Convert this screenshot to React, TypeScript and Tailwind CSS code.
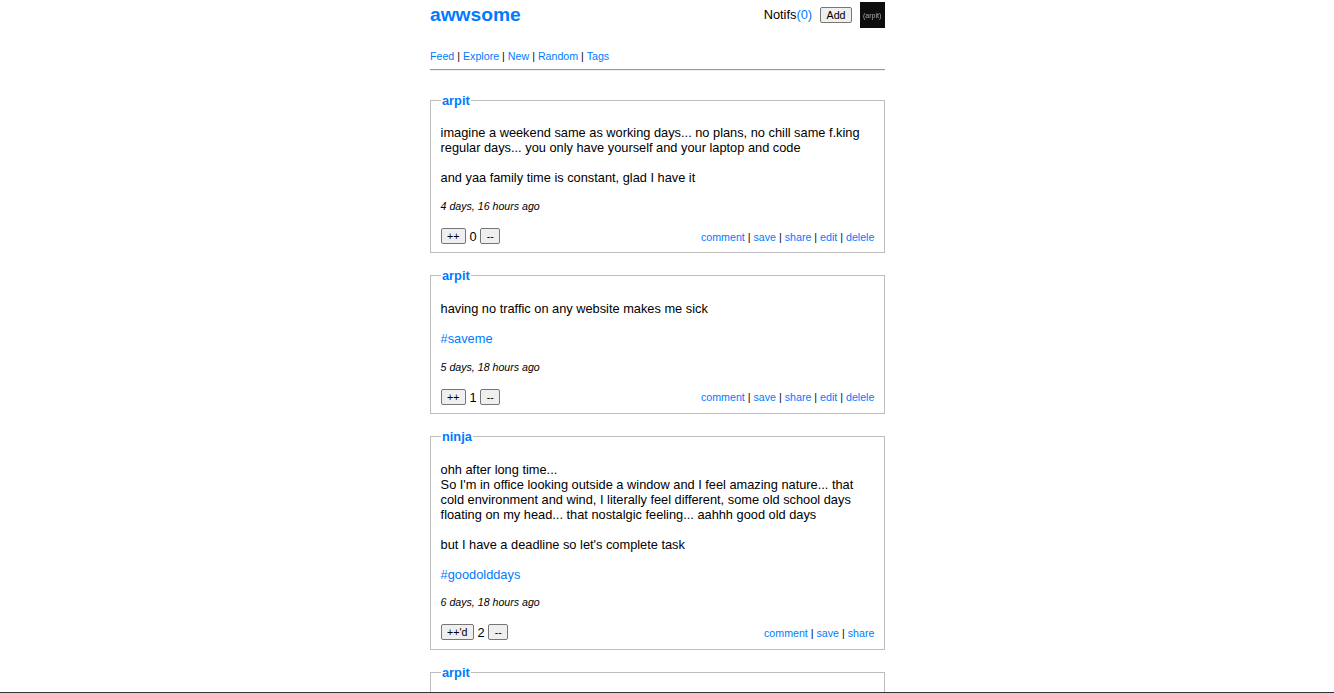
const blue = "text-[#007bff]";

function Sep() {
  return <span className="text-black"> | </span>;
}

function LinkRow({ items, lift }: { items: string[]; lift?: boolean }) {
  return (
    <div className={lift ? "pb-px text-[10.67px] leading-[13px]" : "text-[10.67px] leading-[13px]"}>
      {items.map((t, i) => (
        <span key={t}>
          {i > 0 && <Sep />}
          <a className={blue}>{t}</a>
        </span>
      ))}
    </div>
  );
}

function VoteButton({ label }: { label: string }) {
  return (
    <button className="h-4 rounded-[2px] border border-[#767676] bg-[#efefef] px-[5.5px] text-[10.67px] leading-[13px] text-black">
      {label}
    </button>
  );
}

type Post = {
  author: string;
  time?: string;
  votes?: number;
  up?: string;
  actions?: string[];
  tight?: boolean;
  lift?: boolean;
  raiseTime?: boolean;
  body?: React.ReactNode;
};

function PostCard({ post }: { post: Post }) {
  return (
    <fieldset
      className={
        post.raiseTime
          ? "mb-[15px] border border-[#bdbdbd] px-[9.6px] pb-[9px]"
          : "mb-[15px] border border-[#bdbdbd] px-[9.6px] pb-2"
      }
    >
      <legend className="ml-[0.4px] px-[1px] text-[12.8px] leading-[15px] font-bold">
        <a className={blue}>{post.author}</a>
      </legend>
      {post.body ? (
        <>
          <div className={post.tight ? "pt-[17px] text-[12.8px] leading-[15px] text-black" : "pt-[18px] text-[12.8px] leading-[15px] text-black"}>
            {post.body}
          </div>
          <div
            className={
              post.raiseTime
                ? "mt-[14px] text-[10.624px] leading-[13px] text-black italic"
                : "mt-[15px] text-[10.624px] leading-[13px] text-black italic"
            }
          >
            {post.time}
          </div>
          <div className="mt-[15px] flex items-end justify-between">
            <div className="flex items-center gap-[3.5px] text-[12.8px] leading-[15px] text-black">
              <VoteButton label={post.up ?? ""} />
              <span>{post.votes}</span>
              <VoteButton label="--" />
            </div>
            <LinkRow items={post.actions ?? []} lift={post.lift} />
          </div>
        </>
      ) : (
        <div className="h-10" />
      )}
    </fieldset>
  );
}

const own = ["comment", "save", "share", "edit", "delele"];

const posts: Post[] = [
  {
    author: "arpit",
    time: "4 days, 16 hours ago",
    votes: 0,
    up: "++",
    actions: own,
    tight: true,
    body: (
      <>
        <p>
          imagine a weekend same as working days... no plans, no chill same f.king
          <br />
          regular days... you only have yourself and your laptop and code
        </p>
        <p className="mt-[15px]">and yaa family time is constant, glad I have it</p>
      </>
    ),
  },
  {
    author: "arpit",
    time: "5 days, 18 hours ago",
    votes: 1,
    up: "++",
    actions: own,
    lift: true,
    body: (
      <>
        <p>having no traffic on any website makes me sick</p>
        <p className="mt-[15px]">
          <a className={blue}>#saveme</a>
        </p>
      </>
    ),
  },
  {
    author: "ninja",
    time: "6 days, 18 hours ago",
    votes: 2,
    up: "++'d",
    actions: ["comment", "save", "share"],
    raiseTime: true,
    body: (
      <>
        <p>
          ohh after long time...
          <br />
          So I'm in office looking outside a window and I feel amazing nature... that
          <br />
          cold environment and wind, I literally feel different, some old school days
          <br />
          floating on my head... that nostalgic feeling... aahhh good old days
        </p>
        <p className="mt-[15px]">but I have a deadline so let's complete task</p>
        <p className="mt-[15px]">
          <a className={blue}>#goodolddays</a>
        </p>
      </>
    ),
  },
  { author: "arpit" },
];

export default function App() {
  return (
    <div className="relative h-[693px] overflow-hidden bg-white font-['Liberation_Sans',Arial,sans-serif]">
      <div className="w-[1315px]">
        <div className="mx-auto w-[455px]">
          <header className="flex h-[28px] items-start justify-between pt-[2px]">
            <a className={`text-[19.2px] leading-[26px] font-bold ${blue}`}>awwsome</a>
            <div className="flex items-center">
              <span className="text-[12.8px] leading-[26px] text-black">
                Notifs<a className={blue}>(0)</a>
              </span>
              <button className="ml-2 h-4 rounded-[2px] border border-[#767676] bg-[#efefef] px-[5.5px] text-[10.67px] leading-[13px] text-black">
                Add
              </button>
              <div className="ml-2 flex h-[26px] w-[25px] items-center justify-center bg-[#0d0d0d] text-[7px] leading-none text-[#bdbdbd]">
                <span className="opacity-90 will-change-transform">(arpit)</span>
              </div>
            </div>
          </header>
          <nav className="mt-[22px]">
            <LinkRow items={["Feed", "Explore", "New", "Random", "Tags"]} />
          </nav>
          <hr className="mt-[6px] mb-[22px] h-[2px] border-0 border-t border-t-[#999999] bg-[#eeeeee]" />
          {posts.map((p, i) => (
            <PostCard key={i} post={p} />
          ))}
        </div>
      </div>
      <div className="absolute inset-x-0 bottom-0 h-px bg-[#333333]" />
    </div>
  );
}
